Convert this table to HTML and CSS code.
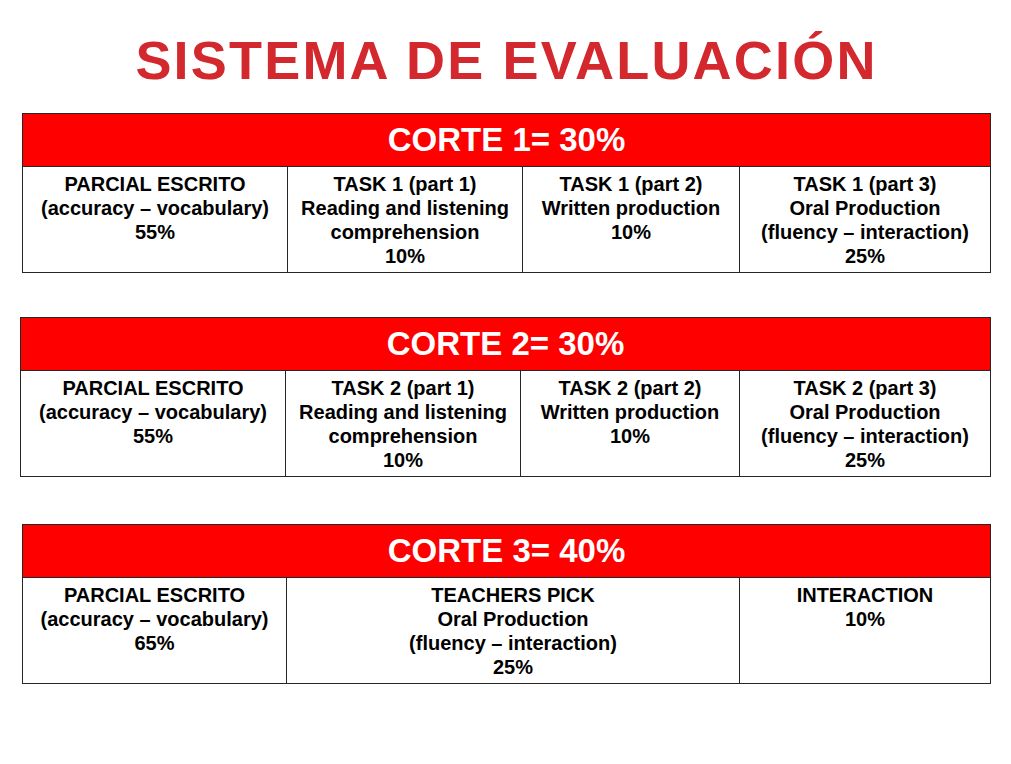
FILE: index.html
```html
<!DOCTYPE html>
<html lang="es">
<head>
<meta charset="utf-8">
<title>Sistema de evaluación</title>
<link rel="stylesheet" href="styles.css">
</head>
<body>
<main class="page">
  <h1 class="title">SISTEMA DE EVALUACIÓN</h1>

  <section class="grade t1">
    <div class="head">CORTE 1= 30%</div>
    <div class="cell">PARCIAL ESCRITO<br>(accuracy – vocabulary)<br>55%</div>
    <div class="cell">TASK 1 (part 1)<br>Reading and listening<br>comprehension<br>10%</div>
    <div class="cell">TASK 1 (part 2)<br>Written production<br>10%</div>
    <div class="cell">TASK 1 (part 3)<br>Oral Production<br>(fluency – interaction)<br>25%</div>
  </section>

  <section class="grade t2">
    <div class="head">CORTE 2= 30%</div>
    <div class="cell">PARCIAL ESCRITO<br>(accuracy – vocabulary)<br>55%</div>
    <div class="cell">TASK 2 (part 1)<br>Reading and listening<br>comprehension<br>10%</div>
    <div class="cell">TASK 2 (part 2)<br>Written production<br>10%</div>
    <div class="cell">TASK 2 (part 3)<br>Oral Production<br>(fluency – interaction)<br>25%</div>
  </section>

  <section class="grade t3">
    <div class="head">CORTE 3= 40%</div>
    <div class="cell">PARCIAL ESCRITO<br>(accuracy – vocabulary)<br>65%</div>
    <div class="cell">TEACHERS PICK<br>Oral Production<br>(fluency – interaction)<br>25%</div>
    <div class="cell">INTERACTION<br>10%</div>
  </section>
</main>
</body>
</html>
```

FILE: styles.css
```css
html, body {
  margin: 0;
  padding: 0;
  background: #ffffff;
}

body {
  font-family: "Liberation Sans", Arial, sans-serif;
  color: #000000;
}

.page {
  width: 1011px;
  height: 764px;
  padding-top: 33px;
  box-sizing: border-box;
}

.title {
  margin: 0 0 26px 0;
  padding-left: 2px;
  text-align: center;
  font-size: 54px;
  line-height: 54px;
  font-weight: bold;
  letter-spacing: 2.2px;
  color: #d2282e;
}

.grade {
  display: grid;
  gap: 1px;
  padding: 1px;
  background: #262626;
  grid-template-rows: 52px 105px;
  width: max-content;
}

.t1 {
  margin-left: 22px;
  grid-template-columns: 264px 234px 216px 250px;
}

.t2 {
  margin-top: 44px;
  margin-left: 20px;
  grid-template-columns: 264px 234px 218px 250px;
}

.t3 {
  margin-top: 47px;
  margin-left: 22px;
  grid-template-columns: 263px 452px 250px;
}

.head {
  grid-column: 1 / -1;
  background: #ff0000;
  color: #ffffff;
  font-weight: bold;
  font-size: 33px;
  display: flex;
  align-items: center;
  justify-content: center;
}

.cell {
  background: #ffffff;
  text-align: center;
  font-weight: bold;
  font-size: 20px;
  line-height: 24px;
  padding: 5px 2px 4px 2px;
}
```
